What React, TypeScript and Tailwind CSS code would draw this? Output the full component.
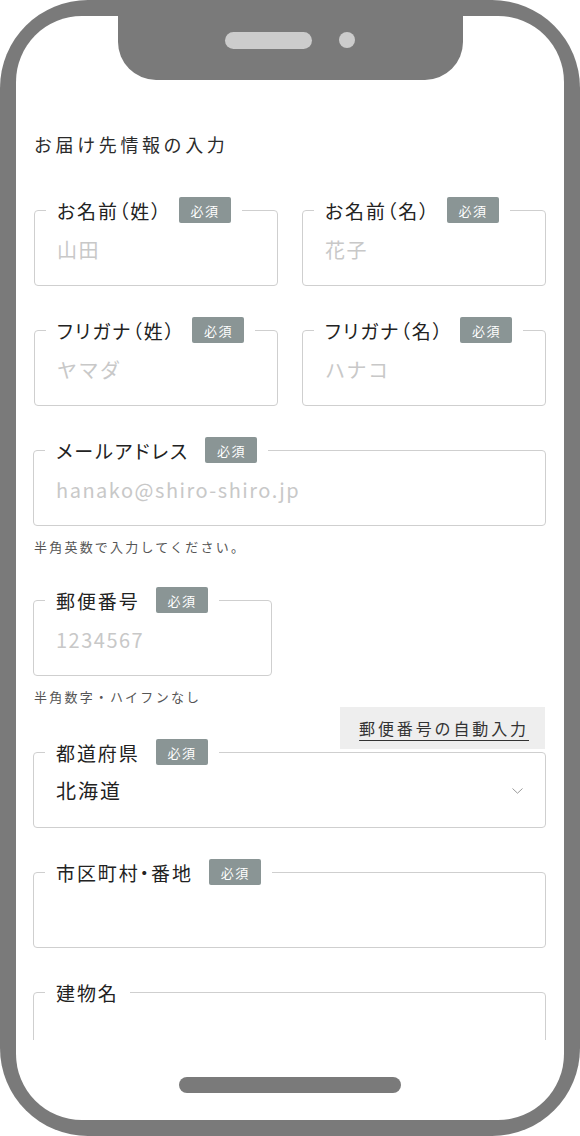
import type { ReactNode } from "react";

const font = "font-['Noto_Sans_CJK_JP','Noto_Sans',sans-serif]";

function Badge() {
  return (
    <span className="flex h-[26px] w-[52px] items-center justify-center rounded-[2px] bg-[#8a9595] pl-[1px] text-[13px] leading-none tracking-[0.12em] text-white">
      必須
    </span>
  );
}

function Field({
  label,
  required,
  children,
  className = "",
}: {
  label: string;
  required?: boolean;
  children: ReactNode;
  className?: string;
}) {
  return (
    <fieldset className={`rounded-[4px] border border-[#cfcfcf] px-[11px] pb-[8px] ${className}`}>
      <legend className="flex h-[26px] items-center gap-[16px] px-[11px]">
        <span className="text-[19px] leading-none tracking-[0.1em] text-[#222] [font-feature-settings:'palt']">{label}</span>
        {required && <Badge />}
      </legend>
      {children}
    </fieldset>
  );
}

function TextInput({ placeholder }: { placeholder?: string }) {
  return (
    <input
      type="text"
      placeholder={placeholder}
      className="block h-[54px] w-full bg-transparent pb-[2px] pl-[11px] text-[20px] tracking-[0.075em] text-[#222] outline-none placeholder:text-[#c8c8c8]"
    />
  );
}

function Note({ children }: { children: ReactNode }) {
  return <p className="mt-[12px] text-[13px] leading-[18px] tracking-[0.17em] text-[#555]">{children}</p>;
}

export default function App() {
  return (
    <div className={`h-[1136px] w-[580px] rounded-[88px] bg-[#7a7a7a] p-[16px] ${font}`}>
      <div className="flex h-full flex-col overflow-hidden rounded-[66px] bg-white">
        <div className="mx-auto flex h-[64px] w-[345px] shrink-0 items-start justify-center gap-[27px] rounded-b-[38px] bg-[#7a7a7a] pt-[16px]">
          <span className="h-[17px] w-[87px] rounded-full bg-[#cccccc]" />
          <span className="size-[16px] rounded-full bg-[#cccccc]" />
        </div>

        <div className="h-[960px] shrink-0 overflow-hidden px-[18px]">
          <h1 className="mt-[51px] text-[18px] leading-[26px] tracking-[0.2em] text-[#2b2b2b]">お届け先情報の入力</h1>

          <div className="mt-[40px] grid grid-cols-2 gap-[24px]">
            <Field label="お名前（姓）" required>
              <TextInput placeholder="山田" />
            </Field>
            <Field label="お名前（名）" required>
              <TextInput placeholder="花子" />
            </Field>
          </div>

          <div className="mt-[31px] grid grid-cols-2 gap-[24px]">
            <Field label="フリガナ（姓）" required>
              <TextInput placeholder="ヤマダ" />
            </Field>
            <Field label="フリガナ（名）" required>
              <TextInput placeholder="ハナコ" />
            </Field>
          </div>

          <Field label="メールアドレス" required className="mt-[31px] -ml-px">
            <TextInput placeholder="hanako@shiro-shiro.jp" />
          </Field>
          <Note>半角英数で入力してください。</Note>

          <Field label="郵便番号" required className="mt-[31px] -ml-px w-[239px]">
            <TextInput placeholder="1234567" />
          </Field>
          <Note>半角数字・ハイフンなし</Note>

          <div className="mt-[1px] flex justify-end">
            <button
              type="button"
              className="mr-[1px] flex h-[42px] items-center bg-[#eeeeee] pl-[19px] pr-[16px] text-[16px] tracking-[0.18em] text-[#333] underline underline-offset-[5px]"
            >
              郵便番号の自動入力
            </button>
          </div>

          <Field label="都道府県" required className="-mt-[10px] -ml-px">
            <div className="flex h-[54px] items-center">
              <select
                defaultValue="北海道"
                className="h-full flex-1 appearance-none bg-transparent pb-[2px] pl-[11px] text-[20px] tracking-[0.1em] text-[#222] outline-none"
              >
                <option>北海道</option>
                <option>青森県</option>
                <option>岩手県</option>
              </select>
              <svg width="11" height="6" viewBox="0 0 11 6" className="mr-[11px] mb-[2px]" fill="none">
                <path d="M0.5 0.5L5.5 5.2L10.5 0.5" stroke="#999" strokeWidth="1" />
              </svg>
            </div>
          </Field>

          <Field label="市区町村・番地" required className="mt-[31px] -ml-px">
            <TextInput />
          </Field>

          <Field label="建物名" className="mt-[31px] -ml-px">
            <TextInput />
          </Field>
        </div>

        <div className="flex flex-1 justify-center pt-[37px]">
          <span className="h-[16px] w-[222px] rounded-full bg-[#7a7a7a]" />
        </div>
      </div>
    </div>
  );
}
